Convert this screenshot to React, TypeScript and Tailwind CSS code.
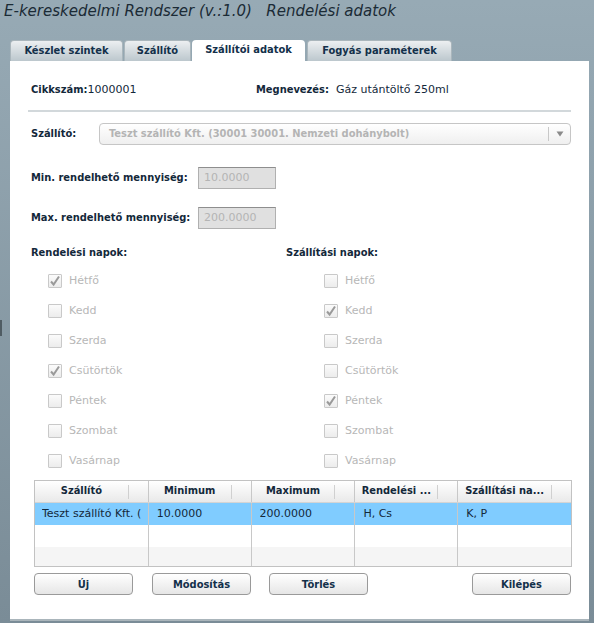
import React from "react";

const B = "font-bold font-['DejaVu_Sans_Condensed','DejaVu_Sans',Verdana,sans-serif]";

function Check({ checked }: { checked: boolean }) {
  return (
    <div className="w-[14px] h-[14px] border border-[#c9c9c9] bg-gradient-to-b from-[#fbfbfb] to-[#ececec] rounded-[1px] flex items-center justify-center shrink-0">
      {checked && (
        <svg width="12" height="12" viewBox="0 0 12 12">
          <path d="M2 6.5 L4.6 9.5 L10 1.5" fill="none" stroke="#9a9a9a" strokeWidth="2" />
        </svg>
      )}
    </div>
  );
}

const days = ["Hétfő", "Kedd", "Szerda", "Csütörtök", "Péntek", "Szombat", "Vasárnap"];
const rendel = [true, false, false, true, false, false, false];
const szall = [false, true, false, false, true, false, false];

function Btn({ children }: { children: React.ReactNode }) {
  return (
    <button className={`w-[99px] h-[22px] rounded-[4px] border border-[#9a9a9a] bg-gradient-to-b from-[#ffffff] to-[#e6e6e6] text-[11px] text-[#13304a] leading-none ${B}`}>
      {children}
    </button>
  );
}

const cols = [
  { t: "Szállító", w: 114 },
  { t: "Minimum", w: 103 },
  { t: "Maximum", w: 104 },
  { t: "Rendelési ...", w: 103 },
  { t: "Szállítási na...", w: 113 },
];
const row = ["Teszt szállító Kft. (", "10.0000", "200.0000", "H, Cs", "K, P"];

const tabCls =
  "h-[21px] rounded-t-[4px] border border-b-0 border-[#aab6bc] bg-gradient-to-b from-[#eceff1] to-[#bcc7cd] text-[11px] text-[#13304a] flex items-center justify-center";

export default function App() {
  return (
    <div className="relative w-[594px] h-[623px] bg-gradient-to-b from-[#97aab5] to-[#7a8c97] overflow-hidden font-['DejaVu_Sans',Verdana,sans-serif]">
      <div className="absolute left-0 top-[320px] w-[2px] h-[16px] bg-[#4f5c63]" />
      <div className="pl-[4px] h-[22px] leading-[22px] text-[15px] italic text-[#1b2b36] whitespace-pre">
        E-kereskedelmi Rendszer (v.:1.0)   Rendelési adatok
      </div>
      <div className="mt-[18px] ml-[10px] flex items-end h-[21px] gap-[1px]">
        <div className={`w-[113px] ${tabCls} ${B}`}>Készlet szintek</div>
        <div className={`w-[67px] ${tabCls} ${B}`}>Szállító</div>
        <div className={`w-[113px] h-[21px] rounded-t-[4px] bg-white text-[11px] text-[#13304a] flex items-center justify-center ${B}`}>
          Szállítói adatok
        </div>
        <div className={`ml-[1px] w-[145px] ${tabCls} ${B}`}>Fogyás paraméterek</div>
      </div>
      <div className="ml-[10px] w-[579px] h-[560px] bg-white border-b-[2px] border-[#aab5bb] pt-[21px] text-[11px]">
        <div className="flex h-[16px] items-center pl-[21px]">
          <div className="w-[225px] text-[#13283a] whitespace-nowrap">
            <span className={B}>Cikkszám:</span>1000001
          </div>
          <div className="text-[#13283a] whitespace-nowrap">
            <span className={B}>Megnevezés:</span>&nbsp; Gáz utántöltő 250ml
          </div>
        </div>
        <div className="mt-[12px] ml-[18px] w-[543px] h-[2px] bg-[#d2d8db]" />
        <div className="mt-[11px] flex items-center pl-[21px] h-[22px]">
          <div className={`w-[68px] text-[#13283a] ${B}`}>Szállító:</div>
          <div className="w-[472px] h-[22px] rounded-[4px] border border-[#c6c6c6] bg-gradient-to-b from-[#ffffff] to-[#efefef] flex items-center">
            <div className={`flex-1 pl-[9px] text-[#b4b4b4] whitespace-nowrap overflow-hidden ${B}`}>
              Teszt szállító Kft. (30001 30001. Nemzeti dohánybolt)
            </div>
            <div className="w-[1px] h-[14px] bg-[#c8c8c8]" />
            <div className="w-[21px] flex items-center justify-center">
              <svg width="8" height="6" viewBox="0 0 8 6">
                <path d="M0.5 0.5 L7.5 0.5 L4 5.5 Z" fill="#8a8a8a" />
              </svg>
            </div>
          </div>
        </div>
        <div className="mt-[22px] flex items-center pl-[21px] h-[22px]">
          <div className={`w-[167px] whitespace-nowrap text-[#13283a] ${B}`}>Min. rendelhető mennyiség:</div>
          <div className="w-[78px] h-[22px] bg-[#e0e0e0] border border-[#b0b0b0] border-t-[#8e8e8e] pl-[5px] flex items-center text-[#b4b4b4]">
            10.0000
          </div>
        </div>
        <div className="mt-[18px] flex items-center pl-[21px] h-[22px]">
          <div className={`w-[167px] whitespace-nowrap text-[#13283a] ${B}`}>Max. rendelhető mennyiség:</div>
          <div className="w-[78px] h-[22px] bg-[#e0e0e0] border border-[#b0b0b0] border-t-[#8e8e8e] pl-[5px] flex items-center text-[#b4b4b4]">
            200.0000
          </div>
        </div>
        <div className={`mt-[16px] flex h-[16px] items-center pl-[21px] text-[#13283a] ${B}`}>
          <div className="w-[255px]">Rendelési napok:</div>
          <div>Szállítási napok:</div>
        </div>
        <div className="mt-[5px] pl-[38px] flex">
          <div className="w-[276px] flex flex-col">
            {days.map((d, i) => (
              <div key={d} className="h-[30px] flex items-center gap-[7px] text-[#b7b7b7]">
                <Check checked={rendel[i]} />
                <span>{d}</span>
              </div>
            ))}
          </div>
          <div className="flex flex-col">
            {days.map((d, i) => (
              <div key={d} className="h-[30px] flex items-center gap-[7px] text-[#b7b7b7]">
                <Check checked={szall[i]} />
                <span>{d}</span>
              </div>
            ))}
          </div>
        </div>
        <div className="mt-[4px] ml-[24px] w-[538px] h-[87px] border border-[#c2c2c2] flex flex-col">
          <div className="flex h-[22px] bg-gradient-to-b from-[#ffffff] to-[#e9e9e9] border-b border-[#d4d4d4]">
            {cols.map((c, i) => (
              <div
                key={c.t}
                className={`h-full flex items-center text-[#13283a] ${B} ${i < 4 ? "border-r border-[#c8c8c8]" : ""}`}
                style={{ width: c.w }}
              >
                <div className="flex-1 text-center whitespace-nowrap overflow-hidden">{c.t}</div>
                <div className="w-[1px] h-[14px] bg-[#d0d0d0]" />
                <div className="w-[19px]" />
              </div>
            ))}
          </div>
          <div className="flex h-[22px] bg-[#80ccff]">
            {cols.map((c, i) => (
              <div
                key={c.t}
                className={`h-full flex items-center text-[#13283a] ${i < 4 ? "border-r border-[#c8c8c8]" : ""} ${i === 0 ? "pl-[7px] pr-[2px]" : "pl-[8px] pr-[2px]"}`}
                style={{ width: c.w }}
              >
                <div className="min-w-0 flex-1 whitespace-nowrap overflow-hidden">{row[i]}</div>
              </div>
            ))}
          </div>
          <div className="flex h-[22px] bg-white">
            {cols.map((c, i) => (
              <div key={c.t} className={`h-full ${i < 4 ? "border-r border-[#c8c8c8]" : ""}`} style={{ width: c.w }} />
            ))}
          </div>
          <div className="flex flex-1 bg-[#f5f5f5]">
            {cols.map((c, i) => (
              <div key={c.t} className={`h-full ${i < 4 ? "border-r border-[#c8c8c8]" : ""}`} style={{ width: c.w }} />
            ))}
          </div>
        </div>
        <div className="mt-[6px] ml-[24px] w-[537px] flex">
          <Btn>Új</Btn>
          <div className="ml-[19px]">
            <Btn>Módosítás</Btn>
          </div>
          <div className="ml-[18px]">
            <Btn>Törlés</Btn>
          </div>
          <div className="ml-auto">
            <Btn>Kilépés</Btn>
          </div>
        </div>
      </div>
    </div>
  );
}
